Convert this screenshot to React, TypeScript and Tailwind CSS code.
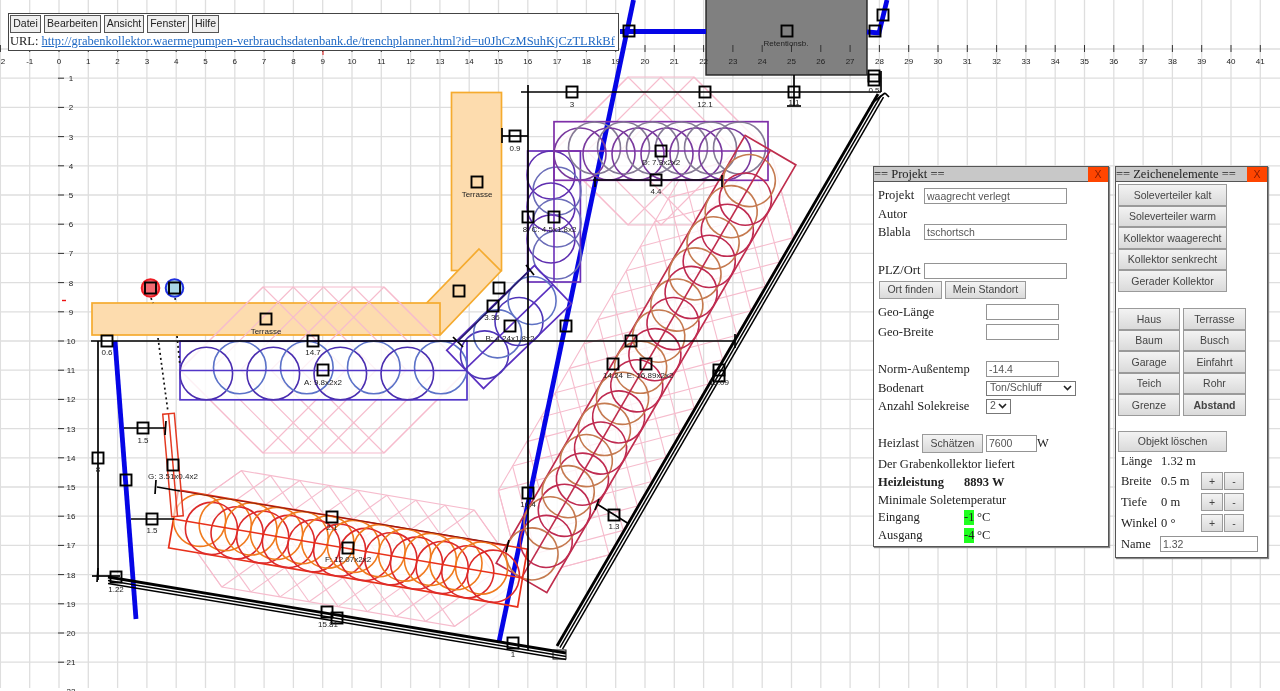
import React from 'react';

const gridX = (k: number) => 59 + 29.3 * k;
const gridY = (k: number) => 49 + 29.2 * k;
const range = (a: number, b: number) => Array.from({ length: b - a + 1 }, (_, i) => a + i);

const Handle = ({ x, y, fill = 'none' }: { x: number; y: number; fill?: string }) => (
  <rect x={x - 5.5} y={y - 5.5} width={11} height={11} fill={fill} stroke="#000" strokeWidth={1.9} />
);

const Label = ({ x, y, children }: { x: number; y: number; children: React.ReactNode }) => (
  <text x={x} y={y} textAnchor="middle" fontSize={8} fill="#222">{children}</text>
);

// pink zone around a collector, hex outline, hatch runs from the long edges to the axis
const Zone = ({ cx, cy, len, h, angle }: { cx: number; cy: number; len: number; h: number; angle: number }) => {
  const half = len / 2;
  const edge = half - h;
  const count = Math.round((2 * edge) / 29.3);
  const lines: number[][] = [];
  for (let i = 0; i <= count; i++) {
    const t = -edge + (i * 2 * edge) / count;
    [-1, 1].forEach(s => {
      lines.push([t, s * h, t + h, 0]);
      lines.push([t, s * h, t - h, 0]);
    });
  }
  const pts = [[-half, 0], [-half + h, -h], [half - h, -h], [half, 0], [half - h, h], [-half + h, h]];
  return (
    <g transform={`translate(${cx} ${cy}) rotate(${angle})`} stroke="#f6bccd" strokeWidth={1.1} fill="none">
      <polygon points={pts.map(p => p.join(',')).join(' ')} />
      {lines.map((l, i) => <line key={i} x1={l[0]} y1={l[1]} x2={l[2]} y2={l[3]} />)}
    </g>
  );
};

type CollectorProps = {
  cx: number; cy: number; len: number; wid: number; angle: number; r: number; step: number;
  frame: string; dark: string; light: string; lightFirst?: boolean;
};

const collectors: CollectorProps[] = [
  { cx: 323.5, cy: 370.5, len: 287, wid: 58.6, angle: 0, r: 26.3, step: 33.5, frame: '#5236c8', dark: '#4a2db0', light: '#5b72c8' },
  { cx: 554, cy: 216.5, len: 131, wid: 52.8, angle: 90, r: 24, step: 16, frame: '#6a2fb8', dark: '#5f2fb0', light: '#6a6cb8' },
  { cx: 509, cy: 327, len: 122, wid: 53, angle: -44, r: 24, step: 24, frame: '#5a30c0', dark: '#4f35b8', light: '#5f72c4' },
  { cx: 661, cy: 151, len: 214, wid: 58.6, angle: 0, r: 26, step: 14.5, frame: '#7e2fa8', dark: '#7a3a9e', light: '#857a95' },
  { cx: 646, cy: 364, len: 495, wid: 58.6, angle: -59.8, r: 26, step: 18, frame: '#bf2d4d', dark: '#bf2a50', light: '#c57a50', lightFirst: true },
  { cx: 348, cy: 548.5, len: 354, wid: 58.6, angle: 9.6, r: 26, step: 13, frame: '#e8301a', dark: '#dd2a2a', light: '#f07a1e', lightFirst: true },
];

const CollectorBack = ({ cx, cy, len, wid, angle }: CollectorProps) => (
  <rect transform={`translate(${cx} ${cy}) rotate(${angle})`} x={-len / 2} y={-wid / 2} width={len} height={wid} fill="#fff" fillOpacity={0.8} />
);

const Collector = ({ cx, cy, len, wid, angle, r, step, frame, dark, light, lightFirst }: CollectorProps) => {
  const circles: React.ReactNode[] = [];
  let i = 0;
  for (let p = -len / 2 + r; p + r <= len / 2 + 1; p += step) {
    const isDark = lightFirst ? i % 2 === 1 : i % 2 === 0;
    circles.push(
      <circle key={i} cx={p} cy={isDark ? 3 : -3} r={r} fill="none" stroke={isDark ? dark : light} strokeWidth={1.6} />
    );
    i++;
  }
  return (
    <g transform={`translate(${cx} ${cy}) rotate(${angle})`}>
      <rect x={-len / 2} y={-wid / 2} width={len} height={wid} fill="none" stroke={frame} strokeWidth={1.7} />
      {circles}
      <line x1={-len / 2} y1={0} x2={len / 2} y2={0} stroke={frame} strokeWidth={1.6} />
    </g>
  );
};

// boundary, one heavy line and two thin ones
const Wall = ({ x1, y1, x2, y2, nx, ny }: { x1: number; y1: number; x2: number; y2: number; nx: number; ny: number }) => (
  <g stroke="#000" fill="none">
    <line x1={x1} y1={y1} x2={x2} y2={y2} strokeWidth={2.8} />
    <line x1={x1 + nx * 3.4} y1={y1 + ny * 3.4} x2={x2 + nx * 3.4} y2={y2 + ny * 3.4} strokeWidth={1.5} />
    <line x1={x1 + nx * 6.4} y1={y1 + ny * 6.4} x2={x2 + nx * 6.4} y2={y2 + ny * 6.4} strokeWidth={1.5} />
  </g>
);

const dims = [
  // main dimension lines
  [521, 92, 881, 92], [528, 85, 528, 650], [91, 341, 735, 341], [98, 341, 98, 580],
  [502, 136, 528, 136], [124, 428, 166, 428], [131, 519, 174, 519], [157, 487, 180, 491],
  [597, 504, 629, 524], [593, 180, 722, 180], [794, 75, 794, 106], [881, 71, 881, 92],
  [92, 576, 120, 576],
  // ticks
  [502, 128, 502, 143], [166, 421, 165, 435], [156, 480, 155, 494], [735, 334, 735, 348],
  [787, 106, 801, 106], [595, 177, 595, 187], [722, 175, 722, 187], [98, 568, 97, 582],
  [599, 499, 595, 510], [509, 540, 506, 552], [453, 337, 463, 347], [526, 265, 534, 275],
];

const Drawing = () => (
  <svg width={1280} height={691} viewBox="0 0 1280 691" className="block font-['Liberation_Sans',sans-serif]">
    {/* Grid */}
    <g stroke="#dedede" strokeWidth={1.3}>
      {range(-2, 41).map(k => <line key={k} x1={gridX(k)} y1={0} x2={gridX(k)} y2={688} />)}
      {range(0, 21).map(k => <line key={k} x1={0} y1={gridY(k)} x2={1280} y2={gridY(k)} />)}
    </g>

    {/* Terrassen */}
    <g fill="#fddcae" stroke="#f5ab2f" strokeWidth={1.7}>
      <rect x={451.5} y={92.5} width={50} height={178} />
      <polygon points="479,249 501,271 441,334 418,312" />
      <rect x={92} y={303} width={348} height={32} />
    </g>

    {/* Zones */}
    <Zone cx={323.5} cy={370} len={287} h={83} angle={0} />
    <Zone cx={661} cy={151} len={214} h={74} angle={0} />
    <Zone cx={646} cy={364} len={495} h={64} angle={-59.8} />
    <Zone cx={348} cy={548.5} len={354} h={59} angle={9.6} />

    {/* Retentionsbecken */}
    <rect x={706} y={-2} width={161} height={77} fill="#808080" stroke="#222" strokeWidth={1.4} />

    {collectors.map((c, i) => <CollectorBack key={i} {...c} />)}

    {/* Blue pipes */}
    <g stroke="#0505e6" strokeWidth={4.8} fill="none">
      <polyline points="620,31.5 706,31.5" />
      <polyline points="867,32 879,33 887,0" />
      <line x1={633.5} y1={0} x2={499} y2={642} />
      <line x1={115} y1={341} x2={136} y2={619} />
    </g>

    {/* Collectors */}
    {collectors.map((c, i) => <Collector key={i} {...c} />)}
    <g transform="translate(173 465) rotate(-5)" stroke="#e33a22" strokeWidth={1.5}>
      <rect x={-5.8} y={-51.5} width={11.6} height={103} fill="#fff" fillOpacity={0.6} />
      <line x1={0} y1={-51.5} x2={0} y2={51.5} />
    </g>

    {/* Walls */}
    <Wall x1={108} y1={577} x2={566} y2={653} nx={0} ny={1} />
    <Wall x1={557} y1={646} x2={878} y2={94} nx={0.86} ny={0.5} />
    <rect x={553} y={650} width={13} height={9} fill="none" stroke="#111" strokeWidth={1} />

    {/* Dimension lines */}
    <g stroke="#000" strokeWidth={1.7}>
      {dims.map((d, i) => <line key={i} x1={d[0]} y1={d[1]} x2={d[2]} y2={d[3]} />)}
      <line x1={457} y1={342} x2={530} y2={270} stroke="#24186a" />
      <line x1={180} y1={491} x2={507} y2={545} stroke="#8a1a10" strokeWidth={1} />
      <line x1={872} y1={103} x2={885} y2={93} />
      <line x1={885} y1={93} x2={889} y2={97} />
    </g>

    {/* Verteiler connections */}
    <g stroke="#111" strokeWidth={1.7} strokeDasharray="2 3" fill="none">
      <line x1={151} y1={298} x2={153} y2={303} />
      <line x1={158} y1={338} x2={168} y2={412} />
      <line x1={175} y1={298} x2={175.5} y2={301} />
      <line x1={177} y1={336} x2={180} y2={366} />
    </g>
    <circle cx={150.5} cy={288} r={8.8} fill="#f46a72" stroke="#ee1c24" strokeWidth={2} />
    <circle cx={174.5} cy={288} r={8.8} fill="#a9d6e6" stroke="#2030e0" strokeWidth={2} />

    {/* Ruler */}
    <g stroke="#333" strokeWidth={1}>
      {range(-2, 41).map(k => <line key={k} x1={gridX(k)} y1={45} x2={gridX(k)} y2={52} />)}
      {range(1, 21).map(k => <line key={k} x1={58} y1={gridY(k)} x2={64} y2={gridY(k)} />)}
    </g>
    <line x1={323} y1={49} x2={323} y2={55} stroke="#d11" strokeWidth={1} />
    <line x1={62} y1={300.5} x2={66} y2={300.5} stroke="#e11" strokeWidth={1.4} />
    <Label x={3} y={63.5}>2</Label>
    {range(-1, 41).map(k => <Label key={k} x={gridX(k)} y={63.5}>{k}</Label>)}
    {range(1, 22).map(k => <Label key={k} x={71} y={gridY(k) + 3}>{k}</Label>)}

    {/* Handles */}
    {[
      [629, 31], [787, 31], [875, 31], [883, 15], [874, 76], [874, 80], [572, 92], [705, 92], [794, 92],
      [515, 136], [477, 182], [528, 217], [554, 217], [661, 151], [656, 180], [459, 291], [499, 288],
      [493, 306], [510, 326], [566, 326], [266, 319], [107, 341], [313, 341], [631, 341], [323, 370],
      [613, 364], [646, 364], [719, 370], [719, 376], [143, 428], [98, 458], [173, 465], [126, 480],
      [528, 493], [614, 515], [332, 517], [152, 519], [348, 548], [116, 577], [327, 612], [337, 618], [513, 643],
      [150.5, 288], [174.5, 288],
    ].map((h, i) => <Handle key={i} x={h[0]} y={h[1]} />)}

    {/* Labels */}
    <g>
      <Label x={786} y={46}>Retentionsb.</Label>
      <Label x={572} y={107}>3</Label>
      <Label x={705} y={107}>12.1</Label>
      <Label x={794} y={105}>1.1</Label>
      <Label x={874} y={93}>0.5</Label>
      <Label x={515} y={151}>0.9</Label>
      <Label x={477} y={197}>Terrasse</Label>
      <Label x={661} y={165}>D: 7.3x2x2</Label>
      <Label x={656} y={194}>4.4</Label>
      <Label x={525} y={232}>8</Label>
      <Label x={554} y={232}>C: 4.5x1.8x2</Label>
      <Label x={492} y={320}>3.36</Label>
      <Label x={510} y={341}>B: 4.24x1.8x2</Label>
      <Label x={266} y={334}>Terrasse</Label>
      <Label x={107} y={355}>0.6</Label>
      <Label x={313} y={355}>14.7</Label>
      <Label x={323} y={385}>A: 9.8x2x2</Label>
      <Label x={613} y={378}>14.24</Label>
      <Label x={650} y={378}>E: 16.89x2x2</Label>
      <Label x={719} y={385}>15.09</Label>
      <Label x={143} y={443}>1.5</Label>
      <Label x={98} y={472}>8</Label>
      <Label x={173} y={479}>G: 3.51x0.4x2</Label>
      <Label x={528} y={507}>16.4</Label>
      <Label x={614} y={529}>1.3</Label>
      <Label x={332} y={530}>2.1</Label>
      <Label x={152} y={533}>1.5</Label>
      <Label x={348} y={562}>F: 12.07x2x2</Label>
      <Label x={116} y={592}>1.22</Label>
      <Label x={328} y={627}>15.81</Label>
      <Label x={513} y={657}>1</Label>
    </g>
  </svg>
);

const btn = "bg-linear-to-b from-[#f3f3f3] to-[#dadada] border border-[#9a9a9a] text-[#444] text-[10.5px] leading-none font-['Liberation_Sans',sans-serif] flex items-center justify-center whitespace-nowrap";
const field = "border border-[#949494] bg-white text-[10.5px] text-[#555] px-[2px] h-[16px] outline-none font-['Liberation_Sans',sans-serif]";
const row = "flex items-center whitespace-nowrap";

const TitleBar = ({ title }: { title: string }) => (
  <div className="flex h-[15px] bg-[#c8c8c8] border-b border-[#555] items-center justify-between">
    <span className="text-[12.5px] leading-none text-[#222]">{title}</span>
    <span className="w-[20px] h-[15px] bg-[#ff4500] text-[#8a1c00] text-[10.5px] leading-none flex items-center justify-center font-['Liberation_Sans',sans-serif]">X</span>
  </div>
);

const MenuBar = () => (
  <div className="absolute left-[8px] top-[13px] w-[611px] h-[38px] bg-white border border-[#444] px-[1px] pt-[1px] font-['Liberation_Serif',serif]">
    <div className="flex gap-[3px]">
      {[['Datei', 'w-[31px]'], ['Bearbeiten', 'w-[57px]'], ['Ansicht', 'w-[40px]'], ['Fenster', 'w-[42px]'], ['Hilfe', 'w-[27px]']].map(([t, w]) => (
        <div key={t} className={`${w} h-[18px] bg-[#efefef] border border-[#555] text-[#222] text-[10.5px] flex items-center justify-center font-['Liberation_Sans',sans-serif]`}>{t}</div>
      ))}
    </div>
    <div className="text-[12.5px] leading-[17px] whitespace-nowrap text-[#222]">
      URL: <span className="text-[#1f69c4] underline">http://grabenkollektor.waermepumpen-verbrauchsdatenbank.de/trenchplanner.html?id=u0JhCzMSuhKjCzTLRkBf</span>
    </div>
  </div>
);

const ProjektPanel = () => (
  <div className="absolute left-[873px] top-[166px] w-[236px] h-[381px] bg-white border border-[#555] shadow-[1px_1px_1px_#888] text-[12.5px] text-[#222] font-['Liberation_Serif',serif]">
    <TitleBar title="== Projekt ==" />
    <div className="pl-[4px] pt-[4px]">
      <div className={`${row} h-[19px]`}><span className="w-[46px]">Projekt</span><input readOnly value="waagrecht verlegt" className={`${field} w-[143px]`} /></div>
      <div className={`${row} h-[18px]`}>Autor</div>
      <div className={`${row} h-[18px]`}><span className="w-[46px]">Blabla</span><input readOnly value="tschortsch" className={`${field} w-[143px]`} /></div>
      <div className="h-[20px]" />
      <div className={`${row} h-[19px]`}><span className="w-[46px]">PLZ/Ort</span><input readOnly value="" className={`${field} w-[143px]`} /></div>
      <div className={`${row} h-[19px] gap-[3px] pl-[1px]`}>
        <div className={`${btn} w-[63px] h-[18px]`}>Ort finden</div>
        <div className={`${btn} w-[81px] h-[18px]`}>Mein Standort</div>
      </div>
      <div className={`${row} h-[23px] pt-[3px]`}><span className="w-[108px]">Geo-Länge</span><input readOnly value="" className={`${field} w-[73px]`} /></div>
      <div className={`${row} h-[20px]`}><span className="w-[108px]">Geo-Breite</span><input readOnly value="" className={`${field} w-[73px]`} /></div>
      <div className="h-[17px]" />
      <div className={`${row} h-[20px]`}><span className="w-[108px]">Norm-Außentemp</span><input readOnly value="-14.4" className={`${field} w-[73px]`} /></div>
      <div className={`${row} h-[18px]`}>
        <span className="w-[108px]">Bodenart</span>
        <div className="w-[90px] h-[15px] border border-[#777] text-[10.5px] text-[#555] flex items-center justify-between pl-[3px] pr-[3px] font-['Liberation_Sans',sans-serif]">
          Ton/Schluff
          <svg width="9" height="6" viewBox="0 0 9 6"><path d="M1 1l3.5 3.5L8 1" fill="none" stroke="#222" strokeWidth="1.6" /></svg>
        </div>
      </div>
      <div className={`${row} h-[18px]`}>
        <span className="w-[108px]">Anzahl Solekreise</span>
        <div className="w-[25px] h-[15px] border border-[#777] text-[10.5px] text-[#555] flex items-center justify-between pl-[3px] pr-[3px] font-['Liberation_Sans',sans-serif]">
          2
          <svg width="9" height="6" viewBox="0 0 9 6"><path d="M1 1l3.5 3.5L8 1" fill="none" stroke="#222" strokeWidth="1.6" /></svg>
        </div>
      </div>
      <div className="h-[18px]" />
      <div className={`${row} h-[20px]`}>
        <span className="w-[44px]">Heizlast</span>
        <div className={`${btn} w-[61px] h-[19px] mr-[3px]`}>Schätzen</div>
        <input readOnly value="7600" className={`${field} w-[51px] h-[17px]`} />
        <span>W</span>
      </div>
      <div className={`${row} h-[21px] pt-[2px]`}>Der Grabenkollektor liefert</div>
      <div className={`${row} h-[17px] font-bold`}><span className="w-[86px]">Heizleistung</span><span>8893 W</span></div>
      <div className={`${row} h-[18px]`}>Minimale Soletemperatur</div>
      <div className={`${row} h-[17px]`}><span className="w-[86px]">Eingang</span><span className="bg-[#1fff1f] w-[10px] h-[15px] leading-[15px] mr-[3px] text-center">-1</span>°C</div>
      <div className={`${row} h-[18px]`}><span className="w-[86px]">Ausgang</span><span className="bg-[#1fff1f] w-[10px] h-[15px] leading-[15px] mr-[3px] text-center">-4</span>°C</div>
    </div>
  </div>
);

const Stepper = () => (
  <div className="flex gap-[1px]">
    <div className={`${btn} w-[22px] h-[18px]`}>+</div>
    <div className={`${btn} w-[20px] h-[18px]`}>-</div>
  </div>
);

const ElementePanel = () => (
  <div className="absolute left-[1115px] top-[166px] w-[153px] h-[392px] bg-white border border-[#555] shadow-[1px_1px_1px_#888] text-[12.5px] text-[#222] font-['Liberation_Serif',serif]">
    <TitleBar title="== Zeichenelemente ==" />
    <div className="pl-[2px] pt-[2px]">
      <div className="flex flex-col w-[109px]">
        {['Soleverteiler kalt', 'Soleverteiler warm', 'Kollektor waagerecht', 'Kollektor senkrecht', 'Gerader Kollektor'].map(t => (
          <div key={t} className={`${btn} h-[21.6px]`}>{t}</div>
        ))}
      </div>
      <div className="grid grid-cols-[62px_63px] gap-x-[3px] mt-[16px]">
        {['Haus', 'Terrasse', 'Baum', 'Busch', 'Garage', 'Einfahrt', 'Teich', 'Rohr', 'Grenze'].map(t => (
          <div key={t} className={`${btn} h-[21.6px]`}>{t}</div>
        ))}
        <div className={`${btn} h-[21.6px] font-bold`}>Abstand</div>
      </div>
      <div className={`${btn} w-[109px] h-[21px] mt-[15px]`}>Objekt löschen</div>
      <div className="pl-[3px]">
        <div className={`${row} h-[19px]`}><span className="w-[40px]">Länge</span>1.32 m</div>
        <div className={`${row} h-[21px]`}><span className="w-[40px]">Breite</span><span className="w-[40px]">0.5 m</span><Stepper /></div>
        <div className={`${row} h-[21px]`}><span className="w-[40px]">Tiefe</span><span className="w-[40px]">0 m</span><Stepper /></div>
        <div className={`${row} h-[21px]`}><span className="w-[40px]">Winkel</span><span className="w-[40px]">0 °</span><Stepper /></div>
        <div className={`${row} h-[21px]`}><span className="w-[39px]">Name</span><input readOnly value="1.32" className={`${field} w-[98px]`} /></div>
      </div>
    </div>
  </div>
);

export default function App() {
  return (
    <div className="relative w-[1280px] h-[691px] overflow-hidden bg-white blur-[0.4px]">
      <Drawing />
      <MenuBar />
      <ProjektPanel />
      <ElementePanel />
    </div>
  );
}
